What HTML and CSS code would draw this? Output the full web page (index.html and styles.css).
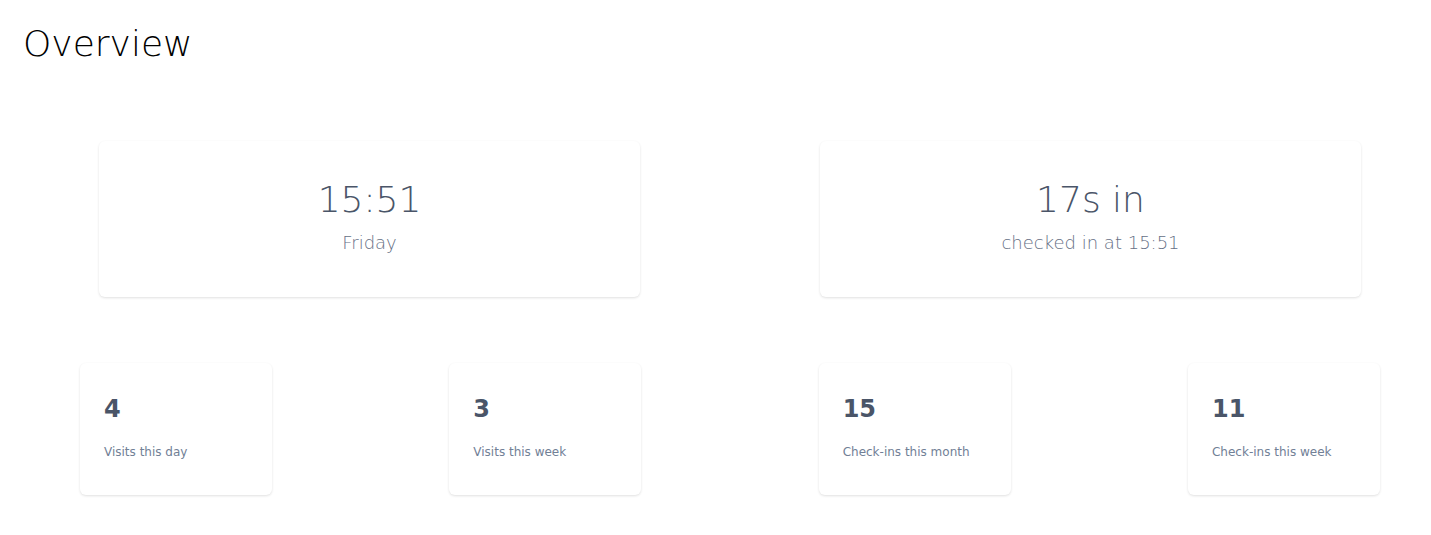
FILE: index.html
```html
<!DOCTYPE html>
<html lang="en">
<head>
<meta charset="utf-8">
<title>Overview</title>
<link rel="stylesheet" href="styles.css">
</head>
<body>
<div class="page">
  <h1 class="title">Overview</h1>
  <div class="content">
    <div class="hero-row">
      <div class="hero-card">
        <div class="hero-value">15:51</div>
        <div class="hero-sub">Friday</div>
      </div>
      <div class="hero-card">
        <div class="hero-value">17s in</div>
        <div class="hero-sub">checked in at 15:51</div>
      </div>
    </div>
    <div class="stat-row">
      <div class="stat-card">
        <div class="stat-value">4</div>
        <div class="stat-label">Visits this day</div>
      </div>
      <div class="stat-card">
        <div class="stat-value">3</div>
        <div class="stat-label">Visits this week</div>
      </div>
      <div class="stat-card">
        <div class="stat-value">15</div>
        <div class="stat-label">Check-ins this month</div>
      </div>
      <div class="stat-card">
        <div class="stat-value">11</div>
        <div class="stat-label">Check-ins this week</div>
      </div>
    </div>
  </div>
</div>
</body>
</html>
```

FILE: styles.css
```css
html, body {
  margin: 0;
  padding: 0;
  background: #ffffff;
}

body {
  font-family: "DejaVu Sans", "Liberation Sans", sans-serif;
  color: #1a202c;
}

.page {
  padding: 26px 0 40px 23px;
}

.title {
  margin: 0;
  font-size: 36px;
  line-height: 36px;
  font-weight: 200;
  color: #000000;
}

.content {
  margin-left: 57px;
  width: 1300px;
  margin-top: 79px;
}

.hero-row {
  display: flex;
  justify-content: space-between;
  padding: 0 19px;
}

.hero-card {
  width: 541px;
  height: 156px;
  box-sizing: border-box;
  padding-top: 41px;
  background: #fff;
  border-radius: 6px;
  box-shadow: 0 1px 3px 0 rgba(0, 0, 0, 0.09), 0 1px 2px 0 rgba(0, 0, 0, 0.04);
  text-align: center;
}

.hero-value {
  font-size: 36px;
  line-height: 36px;
  font-weight: 200;
  color: #4a5568;
}

.hero-sub {
  margin-top: 16px;
  font-size: 18px;
  line-height: 18px;
  font-weight: 200;
  color: #667085;
}

.stat-row {
  display: flex;
  justify-content: space-between;
  margin-top: 66px;
}

.stat-card {
  width: 192px;
  height: 132px;
  box-sizing: border-box;
  padding: 34px 24px 0 24px;
  background: #fff;
  border-radius: 6px;
  box-shadow: 0 1px 3px 0 rgba(0, 0, 0, 0.09), 0 1px 2px 0 rgba(0, 0, 0, 0.04);
}

.stat-value {
  font-size: 24px;
  line-height: 24px;
  font-weight: 700;
  color: #4a5568;
}

.stat-label {
  margin-top: 23px;
  font-size: 12px;
  line-height: 16px;
  color: #718096;
}
```
